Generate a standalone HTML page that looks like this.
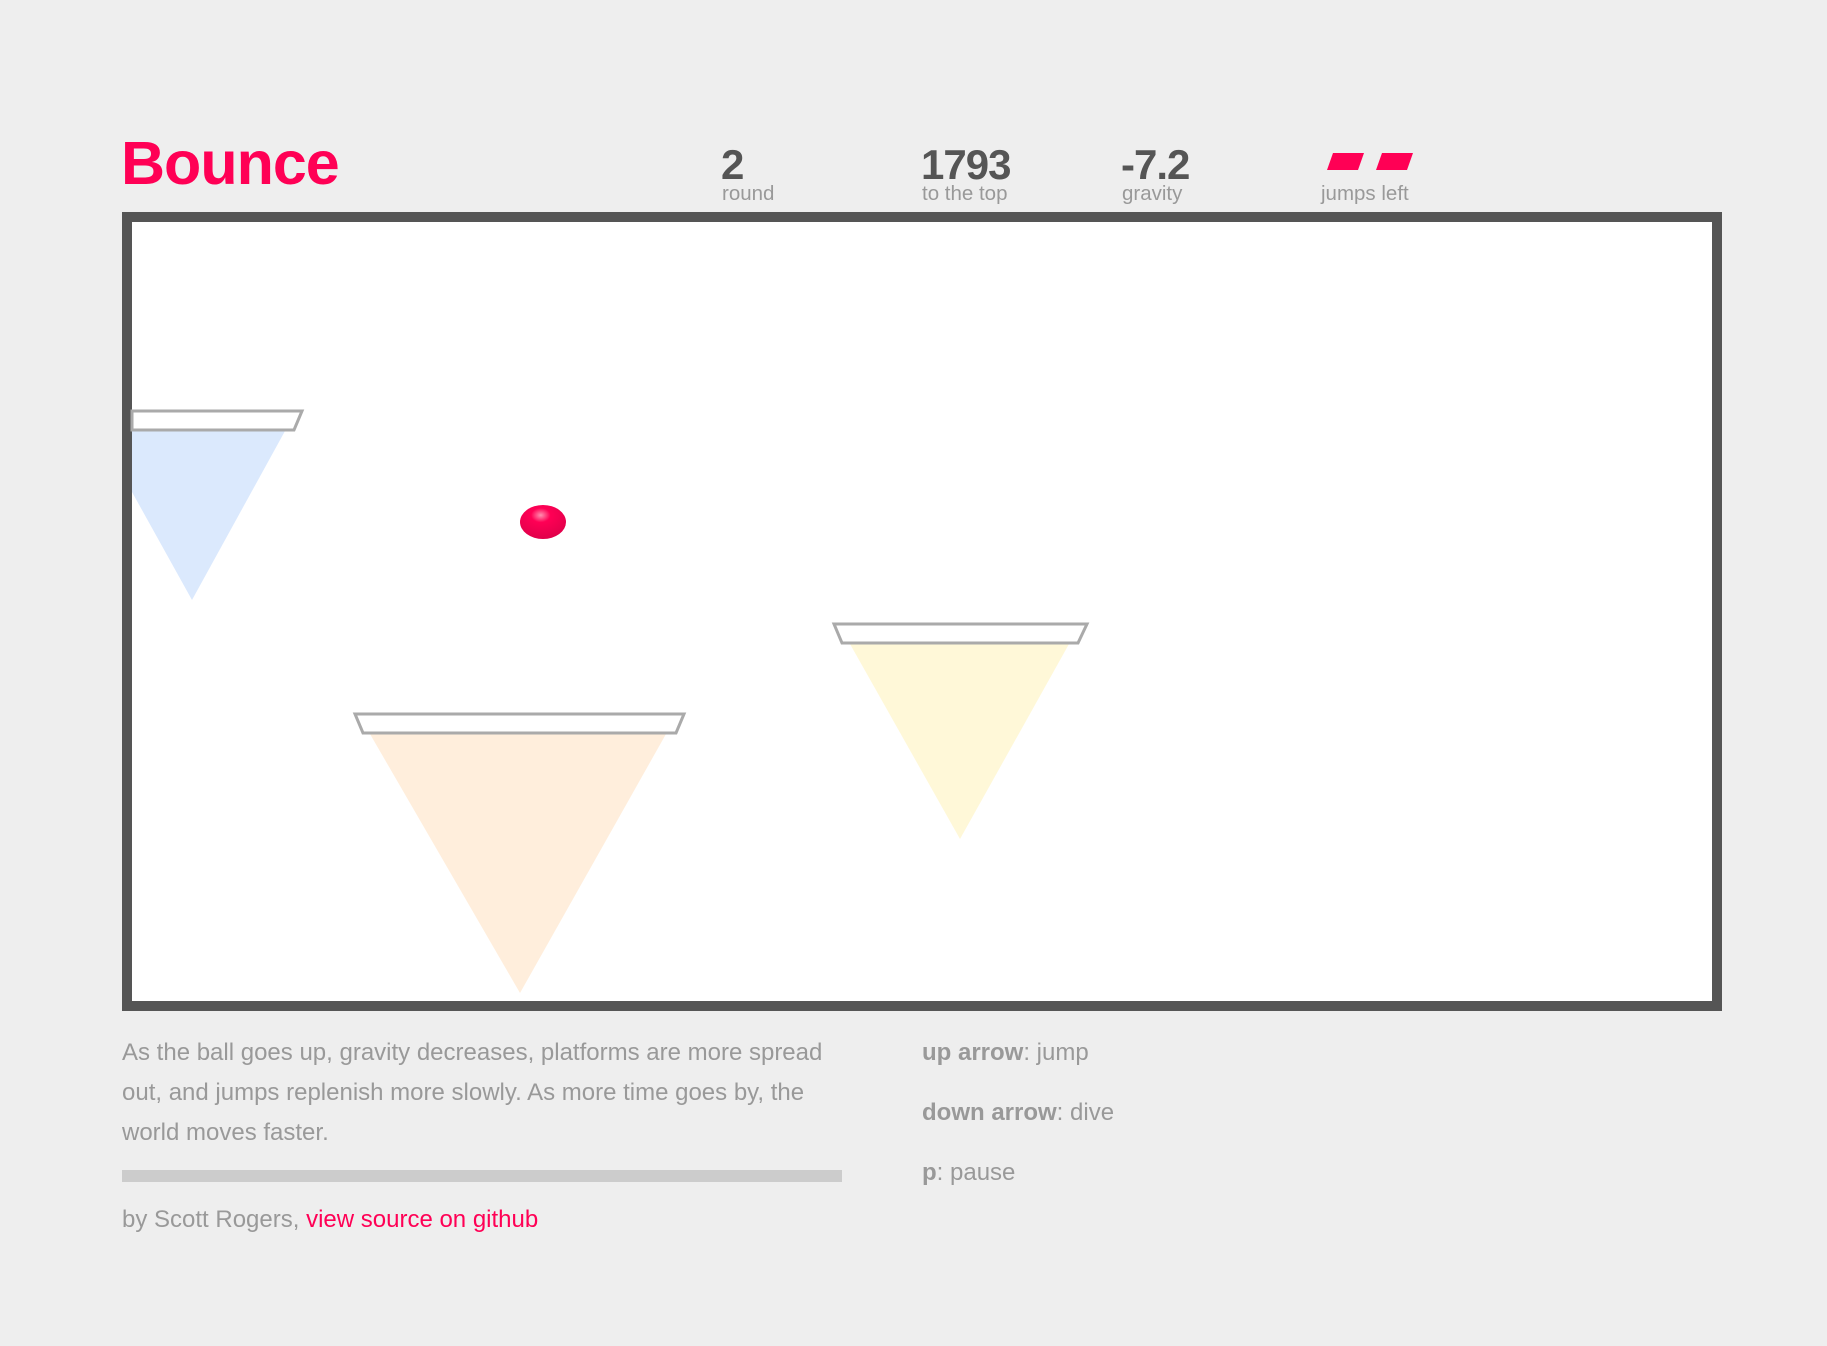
<!DOCTYPE html>
<html><head><meta charset="utf-8"><style>
body{margin:0;background:#eee;width:1827px;height:1346px;position:relative;overflow:hidden;font-family:"Liberation Sans",Arial,sans-serif;}
.a{position:absolute;white-space:nowrap}
.title{left:121px;top:128px;font-size:61px;font-weight:bold;color:#ff0055;letter-spacing:-1px}
.num{font-size:42px;font-weight:bold;color:#555;top:141px;letter-spacing:-1px}
.lbl{font-size:20.5px;color:#999;top:182px}
.p{font-size:24px;color:#999;line-height:40px}
b{color:#999}
</style></head><body>
<div class="a title">Bounce</div>
<div class="a num" style="left:721px">2</div><div class="a lbl" style="left:722px">round</div>
<div class="a num" style="left:921px">1793</div><div class="a lbl" style="left:922px">to the top</div>
<div class="a num" style="left:1121px">-7.2</div><div class="a lbl" style="left:1122px">gravity</div>
<div class="a lbl" style="left:1321px">jumps left</div>
<svg class="a" style="left:0;top:0" width="1827" height="1346">
<polygon points="1333,153 1364,153 1358,170 1327,170" fill="#ff0055"/>
<polygon points="1382,153 1413,153 1407,170 1376,170" fill="#ff0055"/>
<rect x="127" y="217" width="1590" height="789" fill="#fff" stroke="#555" stroke-width="10"/>
<polygon points="132,431 285,431 192,600 132,492" fill="#dbe9fd"/>
<polygon points="132,411 302,411 294,430 132,430" fill="#fff" stroke="#aaa" stroke-width="3"/>
<polygon points="370,734 666,734 520,993" fill="#ffeedc"/>
<polygon points="355,714 684,714 676,733 363,733" fill="#fff" stroke="#aaa" stroke-width="3"/>
<polygon points="850,644 1069,644 960,839" fill="#fff8d8"/>
<polygon points="834,624 1087,624 1078,643 842,643" fill="#fff" stroke="#aaa" stroke-width="3"/>
<defs><radialGradient id="g" cx="0.45" cy="0.3" r="0.7"><stop offset="0" stop-color="#ff8fb0"/><stop offset="0.3" stop-color="#ff0055"/><stop offset="1" stop-color="#e0004a"/></radialGradient></defs>
<ellipse cx="543" cy="522" rx="23" ry="17" fill="url(#g)"/>
<rect x="122" y="1170" width="720" height="12" fill="#ccc"/>
</svg>
<div class="a p" style="left:122px;top:1033px">As the ball goes up, gravity decreases, platforms are more spread<br>out, and jumps replenish more slowly. As more time goes by, the<br>world moves faster.</div>
<div class="a p" style="left:122px;top:1200px">by Scott Rogers, <span style="color:#ff0055">view source on github</span></div>
<div class="a p" style="left:922px;top:1033px"><b>up arrow</b>: jump</div>
<div class="a p" style="left:922px;top:1093px"><b>down arrow</b>: dive</div>
<div class="a p" style="left:922px;top:1153px"><b>p</b>: pause</div>
</body></html>
